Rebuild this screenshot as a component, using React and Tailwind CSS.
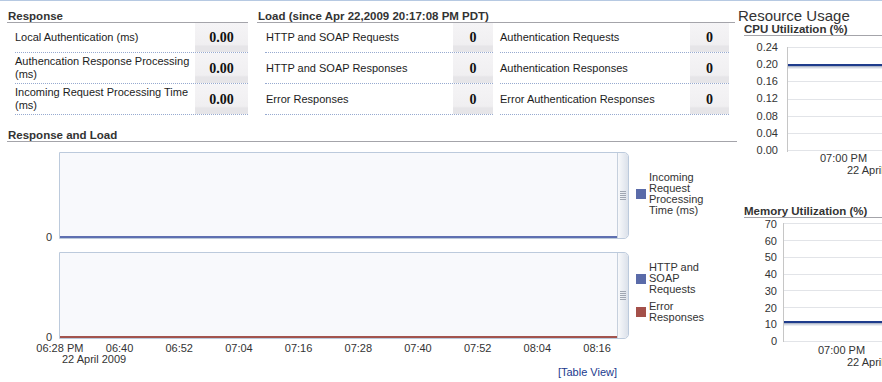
import React from "react";

const cellBg =
  "bg-[linear-gradient(180deg,#f5f4f6_0%,#f0eff1_74%,#e6e5e8_80%,#e6e5e8_100%)]";

function Header({ children, className = "" }) {
  return (
    <div
      className={`pl-[1px] leading-[12px] text-[11.5px] font-bold text-[#333] border-b border-[#a4a4aa] whitespace-nowrap ${className}`}
    >
      {children}
    </div>
  );
}

function Row({ label, value, h, valueW, labelPad = "" }) {
  return (
    <div className={`flex border-b border-dotted border-[#97aad0] ${h}`}>
      <div
        className={`flex-1 min-w-0 flex items-center text-[11px] leading-[13px] text-[#1c1c1c] ${labelPad}`}
      >
        <span>{label}</span>
      </div>
      <div
        className={`${valueW} ${cellBg} flex items-center justify-center font-['Liberation_Serif',serif] font-bold text-[14px] text-[#111]`}
      >
        {value}
      </div>
    </div>
  );
}

function Panel({ line }) {
  return (
    <div className="w-[570px] h-[87px] shrink-0 flex border border-[#bccadc] rounded-r-[5px] bg-[#f8f9fc] overflow-hidden">
      <div className="flex-1 flex flex-col justify-end">
        <div className={`h-[2px] ${line}`} />
      </div>
      <div className="w-[11px] border-l border-[#c6d0dd] rounded-r-[4px] bg-[linear-gradient(90deg,#f8f9fb,#dbe1ea)] flex flex-col items-center justify-center gap-[1px]">
        <div className="w-[6px] h-px bg-[#a0a7b2]" />
        <div className="w-[6px] h-px bg-[#a0a7b2]" />
        <div className="w-[6px] h-px bg-[#a0a7b2]" />
        <div className="w-[6px] h-px bg-[#a0a7b2]" />
        <div className="w-[6px] h-px bg-[#a0a7b2]" />
      </div>
    </div>
  );
}

function LegendItem({ color, lines }) {
  return (
    <div className="flex items-center">
      <div className={`w-[10px] h-[10px] shrink-0 ${color}`} />
      <div className="ml-[3px] text-[11px] leading-[11px] text-[#333] whitespace-nowrap">
        {lines.map((l, i) => (
          <div key={i}>{l}</div>
        ))}
      </div>
    </div>
  );
}

function Plot({ width, height, grid, lineY }) {
  return (
    <svg width={width} height={height} className="block">
      <rect x="0" y="0" width={width} height={height} fill="#ffffff" />
      {grid.map((y, i) => (
        <line
          key={i}
          x1="0"
          x2={width}
          y1={y + 0.5}
          y2={y + 0.5}
          stroke="#e2e4e8"
          strokeWidth="1"
        />
      ))}
      <line x1="0.5" x2="0.5" y1="0" y2={height} stroke="#c6c6c6" strokeWidth="1" />
      <rect x="1" y={lineY + 2} width={width} height="1" fill="#aeb7ca" />
      <rect x="1" y={lineY + 3} width={width} height="1" fill="#d4d9e3" />
      <rect x="1" y={lineY + 4} width={width} height="1" fill="#ebedf2" />
      <rect x="1" y={lineY} width={width} height="2" fill="#1f3c8c" />
    </svg>
  );
}

const xTicks = ["06:28 PM", "06:40", "06:52", "07:04", "07:16", "07:28", "07:40", "07:52", "08:04", "08:16"];

export default function App() {
  return (
    <div className="w-[882px] h-[382px] overflow-hidden bg-white border-t border-[#b6c9e2] flex font-['Liberation_Sans',Arial,sans-serif] text-[#333]">
      {/* Left column */}
      <div className="w-[737px] shrink-0 flex flex-col">
        <div className="flex pl-[7px]">
          {/* Response */}
          <div className="w-[241px] shrink-0">
            <Header className="pt-[9px]">Response</Header>
            <div className="ml-[8px]">
              <Row h="h-[30px]" valueW="w-[53px]" label="Local Authentication (ms)" value="0.00" />
              <Row h="h-[31px]" valueW="w-[53px]" label="Authencation Response Processing (ms)" value="0.00" />
              <Row h="h-[31px]" valueW="w-[53px]" label="Incoming Request Processing Time (ms)" value="0.00" />
            </div>
          </div>
          {/* Load */}
          <div className="w-[478px] shrink-0 ml-[9px]">
            <Header className="pt-[9px]">Load (since Apr 22,2009 20:17:08 PM PDT)</Header>
            <div className="ml-[8px] flex gap-[7px]">
              <div className="w-[228px]">
                <Row h="h-[30px]" valueW="w-[40px]" labelPad="pl-[1px]" label="HTTP and SOAP Requests" value="0" />
                <Row h="h-[31px]" valueW="w-[40px]" labelPad="pl-[1px]" label="HTTP and SOAP Responses" value="0" />
                <Row h="h-[31px]" valueW="w-[40px]" labelPad="pl-[1px]" label="Error Responses" value="0" />
              </div>
              <div className="w-[229px]">
                <Row h="h-[30px]" valueW="w-[39px]" label="Authentication Requests" value="0" />
                <Row h="h-[31px]" valueW="w-[39px]" label="Authentication Responses" value="0" />
                <Row h="h-[31px]" valueW="w-[39px]" label="Error Authentication Responses" value="0" />
              </div>
            </div>
          </div>
        </div>

        {/* Response and Load */}
        <Header className="ml-[7px] mt-[14px]">Response and Load</Header>

        <div className="mt-[10px] flex flex-col gap-[13px]">
          <div className="flex">
            <div className="w-[59px] shrink-0 pr-[7px] flex flex-col justify-end items-end">
              <div className="text-[11px] leading-[12px] mb-[-4px]">0</div>
            </div>
            <Panel line="bg-[#5f70b1]" />
            <div className="flex-1 pl-[7px] pb-[3px] flex items-center">
              <LegendItem
                color="bg-[#5a6ba9]"
                lines={["Incoming", "Request", "Processing", "Time (ms)"]}
              />
            </div>
          </div>
          <div className="flex">
            <div className="w-[59px] shrink-0 pr-[7px] flex flex-col justify-end items-end">
              <div className="text-[11px] leading-[11px] mb-[-4px]">0</div>
            </div>
            <Panel line="bg-[#a3544e]" />
            <div className="flex-1 pl-[7px] pb-[6px] flex flex-col justify-center gap-[6px]">
              <LegendItem color="bg-[#5a6ba9]" lines={["HTTP and", "SOAP", "Requests"]} />
              <LegendItem color="bg-[#a4504a]" lines={["Error", "Responses"]} />
            </div>
          </div>
        </div>

        <div className="mt-[3px] ml-[30px] grid grid-cols-[repeat(10,59.7px)] text-[11px] leading-[12px] text-[#333]">
          {xTicks.map((t) => (
            <div key={t} className="text-center whitespace-nowrap">
              {t}
            </div>
          ))}
        </div>
        <div className="ml-[62px] text-[11px] leading-[11px] text-[#333] whitespace-nowrap">
          22 April 2009
        </div>
        <div className="w-[617px] text-right text-[11px] leading-[12px] mt-[1px] text-[#1b3a8e]">
          [Table View]
        </div>
      </div>

      {/* Right column */}
      <div className="flex-1 min-w-0 overflow-hidden pt-[7px]">
        <div className="pl-[1px] text-[15px] leading-[15px] text-[#333] whitespace-nowrap">
          Resource Usage
        </div>
        <Header className="ml-[7px] !pl-0">CPU Utilization (%)</Header>
        <div className="ml-[7px] mt-[5px] flex items-start">
          <div className="w-[34px] shrink-0 h-[115px] flex flex-col justify-between items-end text-[11px] leading-[12px] text-[#333]">
            <div>0.24</div>
            <div>0.20</div>
            <div>0.16</div>
            <div>0.12</div>
            <div>0.08</div>
            <div>0.04</div>
            <div>0.00</div>
          </div>
          <div className="ml-[9px] mt-[6px] shrink-0 flex flex-col text-[11px] leading-[12px] text-[#333] whitespace-nowrap">
            <Plot width={100} height={105} grid={[0, 17, 34, 52, 69, 86, 103]} lineY={17} />
            <div className="ml-[33px]">07:00 PM</div>
            <div className="ml-[60px]">22 April 2009</div>
          </div>
        </div>

        <Header className="ml-[7px] mt-[29px] !pl-0">Memory Utilization (%)</Header>
        <div className="ml-[7px] flex items-start">
          <div className="w-[33px] shrink-0 h-[129px] flex flex-col justify-between items-end text-[11px] leading-[12px] text-[#333]">
            <div>70</div>
            <div>60</div>
            <div>50</div>
            <div>40</div>
            <div>30</div>
            <div>20</div>
            <div>10</div>
            <div>0</div>
          </div>
          <div className="ml-[6px] mt-[5px] shrink-0 flex flex-col text-[11px] leading-[12px] text-[#333] whitespace-nowrap">
            <Plot width={100} height={119} grid={[0, 17, 34, 51, 67, 84, 101, 118]} lineY={98} />
            <div className="ml-[35px] mt-[2px]">07:00 PM</div>
            <div className="ml-[64px]">22 April 2009</div>
          </div>
        </div>
      </div>
    </div>
  );
}
